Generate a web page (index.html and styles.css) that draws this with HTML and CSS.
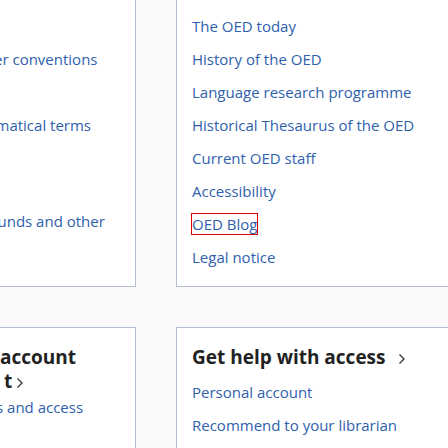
FILE: index.html
```html
<!DOCTYPE html>
<html lang="en">
<head>
<meta charset="utf-8">
<title>OED</title>
<link rel="stylesheet" href="styles.css">
</head>
<body>
<div class="page">
  <section class="card card-top card-left">
    <ul class="guide-list">
      <li class="g1"><a href="#">er conventions</a></li>
      <li class="g2"><a href="#">matical terms</a></li>
      <li class="g3"><a href="#">unds and other</a></li>
    </ul>
  </section>
  <section class="card card-top">
    <ul class="link-list">
      <li><a href="#">The OED today</a></li>
      <li><a href="#">History of the OED</a></li>
      <li><a href="#">Language research programme</a></li>
      <li><a href="#">Historical Thesaurus of the OED</a></li>
      <li><a href="#">Current OED staff</a></li>
      <li><a href="#">Accessibility</a></li>
      <li><a href="#" class="focused">OED Blog</a></li>
      <li><a href="#">Legal notice</a></li>
    </ul>
  </section>
  <section class="card card-bottom card-left">
    <h2 class="card-title">
      <span class="line line-1">account</span>
      <span class="line line-2">t<svg class="chev chev-tight" width="8" height="12" viewBox="0 0 8 12"><polyline points="1.5,1.5 6,6 1.5,10.5" fill="none" stroke="#333" stroke-width="1.3"/></svg></span>
    </h2>
    <p class="card-text"><a href="#">s and access</a></p>
  </section>
  <section class="card card-bottom">
    <h2 class="card-title">Get help with access <svg class="chev" width="8" height="12" viewBox="0 0 8 12"><polyline points="1.5,1.5 6,6 1.5,10.5" fill="none" stroke="#333" stroke-width="1.3"/></svg></h2>
    <ul class="link-list list-after-title">
      <li><a href="#">Personal account</a></li>
      <li><a href="#">Recommend to your librarian</a></li>
    </ul>
  </section>
</div>
</body>
</html>
```
FILE: styles.css
```css
html, body {
  margin: 0;
  padding: 0;
  background: #fafafa;
  overflow: hidden;
}
body {
  font-family: "Open Sans", "Noto Sans", sans-serif;
  font-size: 15px;
  font-weight: 400;
  color: #222;
}
a {
  color: #2f61ad;
  text-decoration: none;
}
ul {
  list-style: none;
  margin: 0;
  padding: 0;
}
.page {
  display: grid;
  grid-template-columns: 158px 320px;
  column-gap: 40px;
  row-gap: 40px;
  margin-left: -22px;
  margin-top: -7px;
}
.card {
  background: #fff;
  border: 1px solid #b4bfd0;
  padding: 0 15px;
  overflow: hidden;
}
.card-top {
  padding-top: 21px;
  padding-bottom: 18px;
}
.card-bottom {
  padding-top: 17px;
  padding-bottom: 40px;
}
.link-list {
  display: flex;
  flex-direction: column;
  gap: 11px;
}
.link-list li,
.guide-list li {
  line-height: 22px;
  white-space: nowrap;
}
.guide-list .g1 { margin-top: 33px; }
.guide-list .g2 { margin-top: 44px; text-indent: 1.5px; }
.guide-list .g3 { margin-top: 74px; text-indent: 3.5px; }
.focused {
  outline: 1px solid #e00000;
}
.card-title {
  margin: 0;
  font-size: 19px;
  font-weight: 700;
  line-height: 24px;
  color: #222;
  white-space: nowrap;
}
.card-title .line {
  display: block;
}
.card-left .line-1 { text-indent: 6px; }
.card-left .line-2 { text-indent: 10px; }
.chev {
  margin-left: 8px;
  vertical-align: -1px;
}
.chev-tight {
  margin-left: 4px;
}
.list-after-title {
  margin-top: 12px;
}
.card-text {
  margin: 3px 0 0;
  line-height: 22px;
  white-space: nowrap;
  text-indent: 2px;
}
```
